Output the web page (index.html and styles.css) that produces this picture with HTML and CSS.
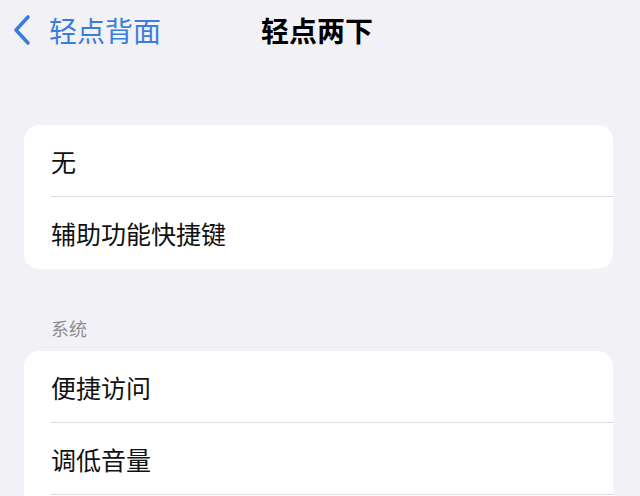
FILE: index.html
```html
<!DOCTYPE html>
<html lang="zh-CN">
<head>
<meta charset="utf-8">
<link rel="stylesheet" href="styles.css">
</head>
<body>
<div class="nav">
  <div class="back">
    <svg class="chev" width="18" height="32" viewBox="0 0 18 32"><path d="M15 3 L3 16 L15 29" fill="none" stroke="#3b7ddb" stroke-width="3.6" stroke-linecap="round" stroke-linejoin="round"/></svg>
    <span class="back-text">轻点背面</span>
  </div>
  <div class="title">轻点两下</div>
  <div></div>
</div>
<div class="card first">
  <div class="row">无</div>
  <div class="row">辅助功能快捷键</div>
</div>
<div class="section">系统</div>
<div class="card">
  <div class="row">便捷访问</div>
  <div class="row">调低音量</div>
  <div class="row"></div>
</div>
</body>
</html>
```
FILE: styles.css
```css
html, body {
  margin: 0;
  padding: 0;
  background: #f2f2f6;
  font-family: "Noto Sans CJK SC", "Noto Sans", sans-serif;
  color: #111;
  overflow: hidden;
  height: 496px;
}
.nav {
  display: grid;
  grid-template-columns: 1fr auto 1fr;
  align-items: center;
  height: 60px;
}
.back {
  display: flex;
  align-items: center;
  padding-left: 13px;
  gap: 18px;
  color: #3b7ddb;
}
.chev { display: block; }
.back-text {
  font-size: 28px;
  line-height: 36px;
}
.title {
  font-size: 28px;
  font-weight: 700;
  line-height: 36px;
  color: #000;
  transform: translateX(-3px);
}
.card {
  margin: 0 27px 0 24px;
  background: #fff;
  border-radius: 15px;
  overflow: hidden;
}
.card.first { margin-top: 65px; }
.row {
  margin-left: 27px;
  height: 72px;
  line-height: 72px;
  font-size: 25px;
  border-bottom: 1px solid #dddde1;
  box-sizing: border-box;
}
.first .row:last-child { border-bottom: none; }
.section {
  margin: 47px 0 11px 51px;
  font-size: 18px;
  line-height: 24px;
  color: #8d8d92;
}
```
